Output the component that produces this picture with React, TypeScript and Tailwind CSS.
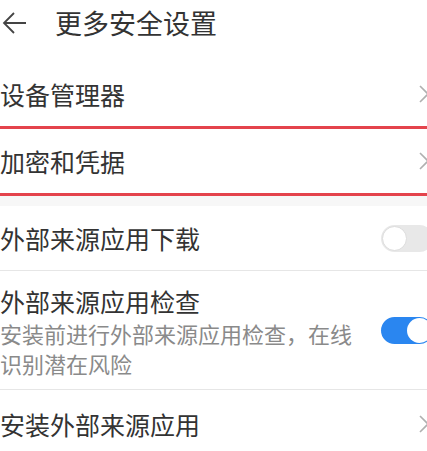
import type { ReactNode } from 'react'

const font = { fontFamily: '"Noto Sans CJK SC", "Noto Sans", sans-serif' }

function Chevron() {
  return (
    <svg width="10" height="18" viewBox="0 0 10 18" className="mr-[-2px] shrink-0">
      <path d="M1 1 L9 9 L1 17" fill="none" stroke="#b0b0b0" strokeWidth="1.6" />
    </svg>
  )
}

function Toggle({ on }: { on: boolean }) {
  return (
    <div
      className={`relative mr-[-6px] h-[27px] w-[52px] shrink-0 rounded-full ${
        on ? 'bg-[#2a86f0]' : 'bg-[#e8e8e8]'
      }`}
    >
      <div
        className={`absolute top-[1px] size-[25px] rounded-full bg-white ${
          on ? 'right-[1px]' : 'left-[1px] border border-[#dcdcdc]'
        }`}
      />
    </div>
  )
}

function Row({ label, right, className = '' }: { label: string; right: ReactNode; className?: string }) {
  return (
    <div className={`flex items-center justify-between ${className}`}>
      <span className="text-[25px] leading-[32px] text-[#333]">{label}</span>
      {right}
    </div>
  )
}

export default function App() {
  return (
    <div className="h-[451px] w-[427px] overflow-hidden bg-white" style={font}>
      <div className="flex h-[45px] items-center">
        <svg width="26" height="24" viewBox="0 0 26 24" className="ml-[2px]">
          <path d="M24 12 H2 M12 2 L2 12 L12 22" fill="none" stroke="#444" strokeWidth="1.8" />
        </svg>
        <span className="ml-[27px] text-[27px] leading-[34px] text-[#333]">更多安全设置</span>
      </div>

      <div className="mt-[17px]">
        <Row label="设备管理器" right={<Chevron />} className="h-[64px]" />
        <Row
          label="加密和凭据"
          right={<Chevron />}
          className="h-[70px] border-y-[3px] border-[#e4434c]"
        />
        <div className="h-[10px] bg-[#f7f7f7]" />
        <Row
          label="外部来源应用下载"
          right={<Toggle on={false} />}
          className="h-[65px] border-b border-[#e6e6e6]"
        />
        <div className="flex h-[119px] items-center justify-between border-b border-[#e6e6e6]">
          <div className="w-[362px] pt-[2px]">
            <div className="text-[25px] leading-[32px] text-[#333]">外部来源应用检查</div>
            <div className="mt-[1px] text-[22px] leading-[30px] text-[#8a8a8a]">
              安装前进行外部来源应用检查，在线识别潜在风险
            </div>
          </div>
          <Toggle on={true} />
        </div>
        <Row label="安装外部来源应用" right={<Chevron />} className="h-[68px]" />
      </div>
    </div>
  )
}
